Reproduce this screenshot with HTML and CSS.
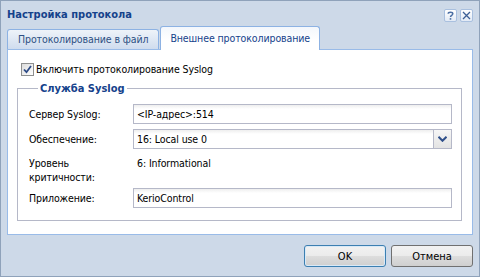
FILE: index.html
```html
<!DOCTYPE html>
<html lang="ru">
<head>
    <meta charset="UTF-8">
    <title>Настройка протокола</title>
    <link rel="stylesheet" href="styles.css">
</head>
<body>
    <div class="window">
        <div class="header">
            <span class="title">Настройка протокола</span>
            <div class="tools">
                <span class="tool">
                    <svg width="9" height="9" viewBox="0 0 9 9"><path d="M2.2 2.8 C2.2 0.6 6.8 0.6 6.8 2.8 C6.8 4.3 4.5 4.3 4.5 5.9" fill="none" stroke="#4a6ea3" stroke-width="1.5"/><rect x="3.7" y="7.1" width="1.6" height="1.6" fill="#4a6ea3"/></svg>
                </span>
                <span class="tool">
                    <svg width="9" height="9" viewBox="0 0 9 9"><path d="M1 1 L8 8 M8 1 L1 8" stroke="#3d5f95" stroke-width="1.3"/></svg>
                </span>
            </div>
        </div>

        <div class="tabs">
            <div class="tab">Протоколирование в файл</div>
            <div class="tab active">Внешнее протоколирование</div>
        </div>

        <div class="panel">
            <label class="check-row">
                <span class="checkbox">
                    <svg width="9" height="9" viewBox="0 0 9 9"><path d="M1 4.5 L3.5 7.2 L8 1" fill="none" stroke="#2c4a86" stroke-width="1.8"/></svg>
                </span>
                Включить протоколирование Syslog
            </label>

            <fieldset class="group">
                <legend>Служба Syslog</legend>

                <div class="row">
                    <span class="label">Сервер Syslog:</span>
                    <div class="field">&lt;IP-адрес&gt;:514</div>
                </div>

                <div class="row">
                    <span class="label">Обеспечение:</span>
                    <div class="field combo">
                        <span class="combo-text">16: Local use 0</span>
                        <span class="trigger">
                            <svg width="9" height="6" viewBox="0 0 9 6"><path d="M0.5 0.8 L4.5 4.8 L8.5 0.8" fill="none" stroke="#2f4f8a" stroke-width="2"/></svg>
                        </span>
                    </div>
                </div>

                <div class="row row-text">
                    <span class="label">Уровень<br>критичности:</span>
                    <span class="value">6: Informational</span>
                </div>

                <div class="row">
                    <span class="label">Приложение:</span>
                    <div class="field">KerioControl</div>
                </div>
            </fieldset>
        </div>

        <div class="footer">
            <button type="button" class="btn focused">OK</button>
            <button type="button" class="btn">Отмена</button>
        </div>
    </div>
</body>
</html>
```

FILE: styles.css
```css
body {
    margin: 0;
    font-family: "DejaVu Sans Condensed", "DejaVu Sans", sans-serif;
    font-size: 10.5px;
    letter-spacing: -0.1px;
    color: #000;
}

.window {
    display: flex;
    flex-direction: column;
    width: 480px;
    height: 277px;
    box-sizing: border-box;
    border: 1px solid #8fa2ba;
    background: #cdd9e8;
    padding: 0 6px;
}

.header {
    display: flex;
    align-items: center;
    justify-content: space-between;
    height: 26px;
    flex-shrink: 0;
}

.title {
    font-weight: bold;
    color: #15428b;
    font-size: 11px;
    letter-spacing: 0;
    margin-top: 1px;
}

.tools {
    display: flex;
    gap: 3px;
    margin-top: 3px;
}

.tool {
    display: flex;
    align-items: center;
    justify-content: center;
    width: 13px;
    height: 13px;
    box-sizing: border-box;
    border: 1px solid #a9c0df;
    border-radius: 2px;
    background: linear-gradient(#ffffff, #e2eaf5);
}

.tabs {
    display: flex;
    align-items: flex-end;
    gap: 1px;
    height: 22px;
    flex-shrink: 0;
    position: relative;
    z-index: 1;
}

.tab {
    height: 20px;
    line-height: 19px;
    box-sizing: border-box;
    padding: 0 10px;
    border: 1px solid #8db2e3;
    border-bottom: none;
    border-radius: 3px 3px 0 0;
    background: linear-gradient(#eef3f9, #cfdcee);
    color: #2d4f82;
}

.tab.active {
    height: 24px;
    line-height: 22px;
    margin-bottom: -1px;
    padding: 0 9px;
    background: linear-gradient(#f3f7fc, #ffffff 60%);
    color: #15428b;
}

.panel {
    height: 186px;
    box-sizing: border-box;
    flex-shrink: 0;
    border: 1px solid #99bbe8;
    background: #fff;
    padding: 12px 10px 0 9px;
}

.check-row {
    display: flex;
    align-items: center;
    gap: 2px;
    height: 14px;
    padding-left: 4px;
}

.checkbox {
    display: flex;
    align-items: center;
    justify-content: center;
    width: 13px;
    height: 13px;
    box-sizing: border-box;
    border: 1px solid #8e8f8f;
    background: linear-gradient(135deg, #dcdcdc, #ffffff);
}

.group {
    margin: 6px 0 0 0;
    padding: 9px 9px 12px 11px;
    border: 1px solid #b5b8c8;
    min-width: 0;
}

.group legend {
    padding: 0 2px;
    margin-left: 9px;
    font-weight: bold;
    font-size: 11px;
    letter-spacing: 0;
    color: #15428b;
    line-height: 13px;
}

.row {
    display: flex;
    align-items: center;
    margin-bottom: 5px;
}

.row:last-child {
    margin-bottom: 0;
}

.row-text {
    align-items: flex-start;
    line-height: 14px;
    margin-top: 7px;
    margin-bottom: 4px;
}

.label {
    width: 104px;
    flex-shrink: 0;
}

.value {
    padding-left: 4px;
}

.field {
    flex: 1;
    display: flex;
    align-items: center;
    height: 20px;
    box-sizing: border-box;
    border: 1px solid #b5b8c8;
    background: linear-gradient(#eeeeee, #ffffff 4px);
    padding-left: 3px;
}

.combo-text {
    flex: 1;
}

.trigger {
    display: flex;
    align-items: center;
    justify-content: center;
    width: 17px;
    height: 18px;
    border-left: 1px solid #b5b8c8;
    background: linear-gradient(#f6f6f6, #e3e3e3);
}

.footer {
    flex: 1;
    display: flex;
    justify-content: flex-end;
    align-items: flex-start;
    gap: 5px;
    padding-top: 10px;
}

.btn {
    width: 82px;
    height: 22px;
    font-family: inherit;
    font-size: 11px;
    color: #000;
    border: 1px solid #707070;
    border-radius: 3px;
    background: linear-gradient(#f2f2f2, #ebebeb 50%, #dddddd 50%, #cfcfcf);
    padding: 0;
}

.btn.focused {
    border-color: #3c7fb1;
    box-shadow: inset 0 0 0 1px #d8e9f7;
}
```
